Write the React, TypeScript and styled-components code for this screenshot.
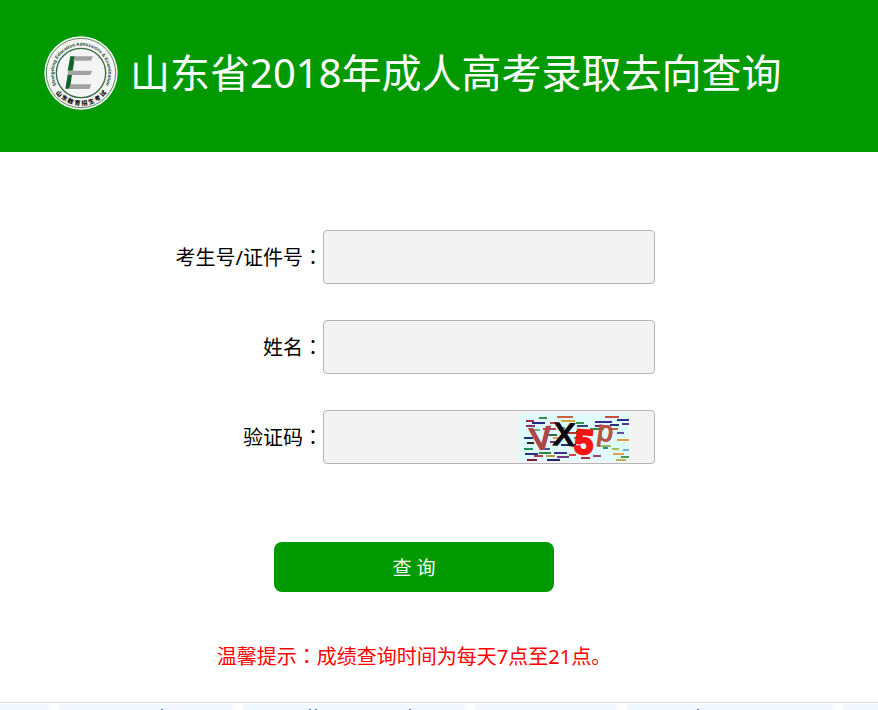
import React from "react";
import styled, { createGlobalStyle } from "styled-components";

const GlobalStyle = createGlobalStyle`
  * { box-sizing: border-box; }
  body {
    margin: 0;
    background: #fff;
    color: #000;
    font-family: "Noto Sans", "Noto Sans CJK SC", sans-serif;
    font-size: 20px;
  }
  html { overflow: hidden; }
`;

const Page = styled.div`
  display: flex;
  flex-direction: column;
  height: 100vh;
  overflow: hidden;
`;

const Header = styled.header`
  display: flex;
  flex: none;
  align-items: center;
  gap: 12px;
  padding: 36px 44px 42px;
  background: #009900;
  color: #fff;
`;

const Logo = styled.svg`
  flex: none;
  width: 74px;
  height: 74px;
`;

const Title = styled.h1`
  margin: 0;
  font-size: 40px;
  line-height: 60px;
  font-weight: 400;
  white-space: nowrap;
`;

const Main = styled.main`
  flex: 1 0 auto;
  padding: 78px 50px 30px 0;
`;

const Form = styled.form`
  display: flex;
  flex-direction: column;
  align-items: center;
  gap: 36px;
`;

const Field = styled.div`
  display: grid;
  grid-template-columns: 150px 332px;
  align-items: center;
`;

const Label = styled.label`
  text-align: right;
  line-height: 30px;
  white-space: nowrap;
`;

const ColonGlyph = styled.span`
  font-family: "Noto Sans CJK TC", sans-serif;
`;

const InputWrap = styled.div`
  position: relative;
`;

const Input = styled.input<{ $captcha?: boolean }>`
  display: block;
  width: 100%;
  height: 54px;
  padding: 0 ${(p) => (p.$captcha ? 144 : 12)}px 0 12px;
  border: 1px solid #b5b5b5;
  border-radius: 4px;
  background: #f3f3f3;
  font: inherit;
`;

const CaptchaButton = styled.button`
  position: absolute;
  top: 4px;
  right: 26px;
  width: 110px;
  height: 47px;
  padding: 0;
  border: 0;
  background: #dffafa;
  cursor: pointer;

  svg { display: block; }
`;

const Submit = styled.button`
  width: 280px;
  height: 50px;
  margin-top: 42px;
  border: 0;
  border-radius: 8px;
  background: #009900;
  color: #fff;
  font: inherit;
  font-size: 19px;
  cursor: pointer;
`;

const Notice = styled.p`
  margin: 49px 0 0;
  color: #ff0000;
  line-height: 30px;
  text-align: center;
`;

const TagBar = styled.footer`
  display: grid;
  flex: none;
  grid-template-columns: 49fr 174fr 222fr 142fr 206fr 35fr;
  gap: 10px;
  height: 8px;
  padding-top: 1px;
  border-top: 1px solid #dedede;
`;

const Tag = styled.div<{ $edge?: "left" | "right" }>`
  border-radius: ${(p) =>
    p.$edge === "left" ? "0 3px 0 0" : p.$edge === "right" ? "3px 0 0 0" : "3px 3px 0 0"};
  background: #f0f7ff;
  overflow: hidden;

  svg { display: block; }
`;

const tags: { edge?: "left" | "right"; marks: number[] }[] = [
  { edge: "left", marks: [] },
  { marks: [102] },
  { marks: [66, 72, 166] },
  { marks: [] },
  { marks: [70] },
  { edge: "right", marks: [] },
];

// The traditional-script face centres the full-width colon in its cell.
function Colon() {
  return <ColonGlyph lang="zh-TW">：</ColonGlyph>;
}

function Emblem() {
  return (
    <Logo viewBox="13 18 222 222" role="img" aria-label="山东教育招生考试">
      <defs>
        <path id="ringTop" d="M53 170 A82 82 0 1 1 195 170" />
        <path id="ringBottom" d="M27 129 A97 97 0 0 0 221 129" />
      </defs>
      <circle cx="124" cy="129" r="110" fill="#f4f5f4" />
      <circle cx="124" cy="129" r="104" fill="none" stroke="#5c8c60" strokeWidth="3" />
      <circle cx="124" cy="129" r="74" fill="#f4f4f4" stroke="#386b40" strokeWidth="4" />
      <text fontFamily="Liberation Sans, sans-serif" fontWeight="700" fontSize="14" fill="#16451f">
        <textPath href="#ringTop" startOffset="50%" textAnchor="middle">
          Shangdong Education Admissions &amp; Examination
        </textPath>
      </text>
      <text fontFamily="Noto Sans CJK SC, sans-serif" fontWeight="900" fontSize="18" fill="#111">
        <textPath href="#ringBottom" startOffset="50%" textAnchor="middle">
          {"山\u2005东\u2005教\u2005育\u2005招\u2005生\u2005考\u2005试"}
        </textPath>
      </text>
      <path d="M92 79h14l-7 43H84z M84 134h13l-6 42H77z" fill="#126329" />
      <path d="M106 79h54l-6 13h-54z M86 122h71l-5 13H83z M92 163h63l-6 14H87z" fill="#a1a3a2" />
    </Logo>
  );
}

const noise: [number, number, number, string][] = [
  [7, 6, 8, "#a32d55"], [13, 8, 13, "#252a80"], [20, 3, 8, "#3e8a4d"], [31, 8, 9, "#c23b4e"],
  [38, 2, 16, "#d0603e"], [42, 6, 14, "#d7a536"], [58, 11, 11, "#2e4e74"], [57, 8, 8, "#329547"],
  [76, 7, 17, "#35299a"], [86, 2, 14, "#c74a45"], [98, 5, 12, "#2b3290"], [76, 11, 14, "#7d2674"],
  [91, 10, 9, "#253879"], [103, 9, 7, "#5a3290"], [7, 11, 9, "#7c3778"], [12, 15, 9, "#66b37b"],
  [24, 14, 13, "#c2414a"], [26, 20, 12, "#2a7041"], [57, 17, 11, "#1c2632"], [71, 14, 14, "#3c8a3e"],
  [90, 14, 9, "#ad7332"], [98, 18, 7, "#62509a"], [5, 23, 9, "#233181"], [8, 28, 7, "#292929"],
  [5, 34, 9, "#218f55"], [31, 27, 9, "#64337d"], [34, 23, 6, "#dd9f49"], [42, 30, 15, "#202f71"],
  [55, 23, 12, "#3c9a79"], [98, 25, 13, "#e59a48"], [80, 31, 12, "#95bc64"], [93, 34, 7, "#a0bf5b"],
  [6, 39, 13, "#2c317d"], [15, 41, 9, "#b13b49"], [20, 38, 12, "#2e873f"], [27, 41, 9, "#bb963d"],
  [35, 38, 13, "#3e2f92"], [28, 45, 13, "#242474"], [38, 42, 12, "#74388b"], [50, 40, 7, "#d2454e"],
  [62, 43, 9, "#a0303c"], [74, 41, 8, "#9b4070"], [84, 33, 5, "#2c8c88"], [94, 39, 11, "#e0a04d"],
  [104, 35, 6, "#6fb4ce"], [102, 42, 8, "#4a9a52"], [8, 45, 10, "#7a1b3d"], [97, 45, 10, "#b8b34e"],
  [48, 18, 16, "#b03535"], [22, 34, 9, "#35559a"], [40, 13, 6, "#35a08c"],
];

function CaptchaPicture() {
  return (
    <svg width="110" height="47" viewBox="0 0 110 47" aria-hidden="true">
      {noise.map(([x, y, w, color], i) => (
        <rect key={i} x={x} y={y} width={w} height="2" fill={color} />
      ))}
      <g fontFamily="Liberation Sans, sans-serif" textAnchor="middle">
        <text x="22" y="35" fontSize="31" stroke="#ad454b" strokeWidth="2" fill="#ad454b" transform="rotate(-7 22 25)">V</text>
        <text x="45" y="31" fontSize="31" stroke="#08080d" strokeWidth="2" fill="#08080d" transform="rotate(3 45 21)">X</text>
        <text x="65" y="39" fontSize="32" stroke="#fa1515" strokeWidth="4" fill="#fa1515" transform="rotate(5 65 28)">5</text>
        <text x="86" y="27" fontSize="29" stroke="#b65345" strokeWidth="1" fill="#b65345" transform="rotate(8 86 20)">p</text>
      </g>
    </svg>
  );
}

export default function App() {
  return (
    <>
      <GlobalStyle />
      <Page lang="zh-CN">
        <Header>
          <Emblem />
          <Title>山东省2018年成人高考录取去向查询</Title>
        </Header>
        <Main>
          <Form onSubmit={(e) => e.preventDefault()}>
            <Field>
              <Label htmlFor="candidate">考生号/证件号<Colon /></Label>
              <InputWrap><Input id="candidate" type="text" /></InputWrap>
            </Field>
            <Field>
              <Label htmlFor="name">姓名<Colon /></Label>
              <InputWrap><Input id="name" type="text" /></InputWrap>
            </Field>
            <Field>
              <Label htmlFor="captcha">验证码<Colon /></Label>
              <InputWrap>
                <Input id="captcha" type="text" autoComplete="off" $captcha />
                <CaptchaButton type="button" aria-label="换一张验证码">
                  <CaptchaPicture />
                </CaptchaButton>
              </InputWrap>
            </Field>
            <Submit type="submit">查 询</Submit>
          </Form>
          <Notice>温馨提示<Colon />成绩查询时间为每天7点至21点。</Notice>
        </Main>
        <TagBar>
          {tags.map((tag, i) => (
            <Tag key={i} $edge={tag.edge}>
              <svg width="100%" height="6" aria-hidden="true">
                {tag.marks.map((x) => (
                  <rect key={x} x={x} y="5" width="2" height="1" fill="#4d7fd0" />
                ))}
              </svg>
            </Tag>
          ))}
        </TagBar>
      </Page>
    </>
  );
}
